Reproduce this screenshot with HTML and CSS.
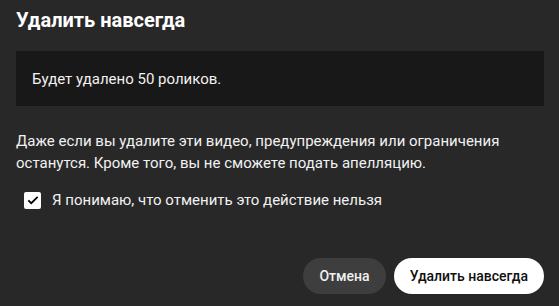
FILE: index.html
```html
<!DOCTYPE html>
<html lang="ru">
<head>
<meta charset="utf-8">
<link rel="stylesheet" href="styles.css">
</head>
<body>
<div class="dialog">
  <h1 class="title">Удалить навсегда</h1>
  <div class="notice">Будет удалено 50 роликов.</div>
  <p class="desc">Даже если вы удалите эти видео, предупреждения или ограничения останутся. Кроме того, вы не сможете подать апелляцию.</p>
  <label class="check">
    <span class="box"><svg viewBox="0 0 24 24" width="14" height="14"><path d="M4 12.5l5 5L20 6.5" fill="none" stroke="#000" stroke-width="3"/></svg></span>
    <span class="check-label">Я понимаю, что отменить это действие нельзя</span>
  </label>
  <div class="actions">
    <button class="btn btn-cancel">Отмена</button>
    <button class="btn btn-delete">Удалить навсегда</button>
  </div>
</div>
</body>
</html>
```
FILE: styles.css
```css
html, body {
  margin: 0;
  padding: 0;
  background: #282828;
}
body {
  font-family: Roboto, "Noto Sans", sans-serif;
  color: #f1f1f1;
}
.dialog {
  width: 559px;
  height: 306px;
  box-sizing: border-box;
  padding: 6px 15px 0 16px;
  display: flex;
  flex-direction: column;
}
.title {
  margin: 0;
  font-size: 20px;
  font-weight: 700;
  line-height: 28px;
  color: #fff;
}
.notice {
  margin-top: 17px;
  background: #181818;
  height: 55px;
  box-sizing: border-box;
  padding: 0 16px;
  display: flex;
  align-items: center;
  font-size: 15px;
  color: #f1f1f1;
}
.desc {
  margin: 24px 0 0;
  font-size: 15px;
  line-height: 22px;
  color: #f1f1f1;
}
.check {
  margin-top: 17px;
  display: flex;
  align-items: center;
  padding-left: 8px;
  gap: 11px;
}
.box {
  width: 17px;
  height: 17px;
  border-radius: 2px;
  background: #fff;
  display: flex;
  align-items: center;
  justify-content: center;
}
.check-label {
  font-size: 15px;
  color: #f1f1f1;
}
.actions {
  margin-top: auto;
  margin-bottom: 12px;
  display: flex;
  justify-content: flex-end;
  gap: 8px;
}
.btn {
  height: 36px;
  border: none;
  border-radius: 18px;
  font-family: Roboto, "Noto Sans", sans-serif;
  font-size: 14px;
  font-weight: 500;
  padding: 0 16px;
  white-space: nowrap;
}
.btn-cancel {
  background: #3e3e3e;
  color: #f1f1f1;
  min-width: 82px;
}
.btn-delete {
  background: #fff;
  color: #0f0f0f;
  min-width: 150px;
}
```
